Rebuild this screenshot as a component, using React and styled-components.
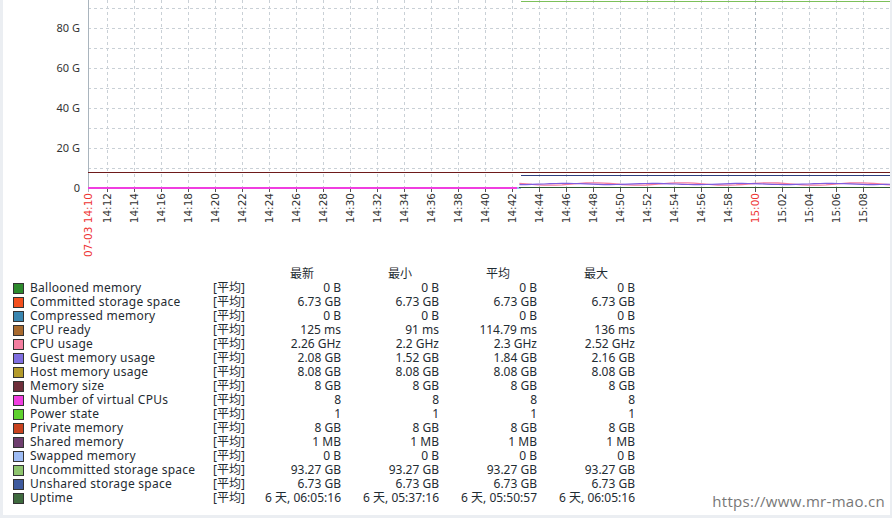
import React from "react";
import styled, { createGlobalStyle } from "styled-components";

const Global = createGlobalStyle`
  html, body { margin: 0; padding: 0; background: #ebeef2; }
  body { font-family: "Noto Sans", "Noto Sans CJK SC", sans-serif; }
`;

const Page = styled.div`
  width: 887px;
  height: 515px;
  margin-left: 3px;
  background: #fff;
  position: relative;
  overflow: hidden;
`;

const Chart = styled.svg`
  display: block;
`;

const Legend = styled.div`
  display: grid;
  grid-template-columns: 200px 30px 98px 98px 98px 98px;
  padding-left: 10px;
  margin-top: 4px;
  font-size: 12px;
  line-height: 14px;
  color: #1f2c33;
`;

const Head = styled.div`
  padding-left: 47px;
  white-space: nowrap;
`;

const Name = styled.div`
  display: flex;
  align-items: center;
  gap: 6px;
  white-space: nowrap;
  letter-spacing: 0.25px;
`;

const Swatch = styled.span`
  width: 9px;
  height: 9px;
  border: 1px solid #333;
  background: ${(p) => p.$c};
  flex: none;
`;

const Tag = styled.div`
  white-space: nowrap;
`;

const Val = styled.div`
  text-align: right;
  white-space: nowrap;
`;

const Watermark = styled.div`
  position: absolute;
  right: 5px;
  bottom: 4px;
  font-size: 15px;
  color: #777;
  font-family: "Open Sans", sans-serif;
  letter-spacing: 0.3px;
`;

const rows = [
  ["Ballooned memory", "#2d8a2d", "0 B", "0 B", "0 B", "0 B"],
  ["Committed storage space", "#f4501e", "6.73 GB", "6.73 GB", "6.73 GB", "6.73 GB"],
  ["Compressed memory", "#3a86b0", "0 B", "0 B", "0 B", "0 B"],
  ["CPU ready", "#a86a2e", "125 ms", "91 ms", "114.79 ms", "136 ms"],
  ["CPU usage", "#f47ea0", "2.26 GHz", "2.2 GHz", "2.3 GHz", "2.52 GHz"],
  ["Guest memory usage", "#7f6ee0", "2.08 GB", "1.52 GB", "1.84 GB", "2.16 GB"],
  ["Host memory usage", "#b39a2a", "8.08 GB", "8.08 GB", "8.08 GB", "8.08 GB"],
  ["Memory size", "#6e2e3a", "8 GB", "8 GB", "8 GB", "8 GB"],
  ["Number of virtual CPUs", "#f03ee0", "8", "8", "8", "8"],
  ["Power state", "#5ed12e", "1", "1", "1", "1"],
  ["Private memory", "#c8421e", "8 GB", "8 GB", "8 GB", "8 GB"],
  ["Shared memory", "#6e3e6e", "1 MB", "1 MB", "1 MB", "1 MB"],
  ["Swapped memory", "#9ebcf4", "0 B", "0 B", "0 B", "0 B"],
  ["Uncommitted storage space", "#8ec46e", "93.27 GB", "93.27 GB", "93.27 GB", "93.27 GB"],
  ["Unshared storage space", "#3e5a9e", "6.73 GB", "6.73 GB", "6.73 GB", "6.73 GB"],
  ["Uptime", "#3e6a3e", "6 天, 06:05:16", "6 天, 05:37:16", "6 天, 05:50:57", "6 天, 06:05:16"],
];

function ChartSvg() {
  const ox = -3;
  const hy = [8, 28, 48, 68, 88, 108, 128, 148, 168];
  const ticks = [];
  for (let i = 0; i < 29; i++) {
    const m = 12 + i * 2;
    const h = 14 + Math.floor(m / 60);
    const mm = m % 60;
    ticks.push({ x: 107 + i * 27 + ox, label: `${h}:${String(mm).padStart(2, "0")}`, red: m === 60 });
  }
  const wave = (y, amp, ph) => {
    let d = `M${520 + ox} ${y}`;
    for (let x = 520; x <= 892; x += 6) {
      d += ` L${x + ox} ${(y + amp * Math.sin(x / 14 + ph)).toFixed(1)}`;
    }
    return d;
  };
  return (
    <Chart width="887" height="263" viewBox="0 0 887 263">
      {hy.map((y) => (
        <line key={y} x1={88 + ox} x2="887" y1={y + 0.5} y2={y + 0.5} stroke="#c9d0d6" strokeDasharray="3 3" />
      ))}
      {ticks.map((t) => (
        <line key={t.x} x1={t.x + 0.5} x2={t.x + 0.5} y1="0" y2="188" stroke={t.red ? "#aab4bd" : "#c9d0d6"} strokeDasharray="3 3" />
      ))}
      <line x1={88.5 + ox} x2={88.5 + ox} y1="0" y2="192" stroke="#a9b4bd" />
      {ticks.map((t) => (
        <line key={"k" + t.x} x1={t.x + 0.5} x2={t.x + 0.5} y1="188" y2="192" stroke="#555" />
      ))}
      {[["80 G", 28], ["60 G", 68], ["40 G", 108], ["20 G", 148], ["0", 188]].map(([l, y]) => (
        <text key={l} x={80 + ox} y={y + 4} textAnchor="end" fontSize="11" fill="#333" fontFamily="Noto Sans, sans-serif">{l}</text>
      ))}
      {ticks.map((t) => (
        <text key={"l" + t.x} transform={`translate(${t.x + 4} 193) rotate(-90)`} textAnchor="end" fontSize="10.5" fill={t.red ? "#e33" : "#333"} fontFamily="DejaVu Sans, sans-serif">{t.label}</text>
      ))}
      <text transform={`translate(${92 + ox} 193) rotate(-90)`} textAnchor="end" fontSize="10.5" fill="#e33" fontFamily="DejaVu Sans, sans-serif">07-03 14:10</text>
      <line x1={88 + ox} x2="887" y1="172.5" y2="172.5" stroke="#6e1a1a" strokeWidth="1.2" />
      <line x1={88 + ox} x2={519 + ox} y1="188" y2="188" stroke="#f03ee0" strokeWidth="2" />
      <line x1={517 + ox} x2={521 + ox} y1="188" y2="188" stroke="#9ebcf4" strokeWidth="2" />
      <line x1={521 + ox} x2="887" y1="1.5" y2="1.5" stroke="#7cc05a" strokeWidth="1" />
      <line x1={521 + ox} x2="887" y1="175.5" y2="175.5" stroke="#2e3e7e" strokeWidth="1" />
      <line x1={519 + ox} x2="887" y1="187.5" y2="187.5" stroke="#2e5a2e" strokeWidth="1.2" />
      <path d={wave(184, 1.2, 0)} stroke="#f47ea0" fill="none" strokeWidth="1.3" />
      <path d={wave(184, 0.6, 2)} stroke="#7f5ee0" fill="none" strokeWidth="1.2" />
    </Chart>
  );
}

export default function App() {
  return (
    <>
      <Global />
      <Page>
        <ChartSvg />
        <Legend>
          <div />
          <div />
          <Head>最新</Head>
          <Head>最小</Head>
          <Head>平均</Head>
          <Head>最大</Head>
          {rows.map((r) => (
            <React.Fragment key={r[0]}>
              <Name><Swatch $c={r[1]} />{r[0]}</Name>
              <Tag>[平均]</Tag>
              <Val>{r[2]}</Val>
              <Val>{r[3]}</Val>
              <Val>{r[4]}</Val>
              <Val>{r[5]}</Val>
            </React.Fragment>
          ))}
        </Legend>
        <Watermark>https://www.mr-mao.cn</Watermark>
      </Page>
    </>
  );
}
